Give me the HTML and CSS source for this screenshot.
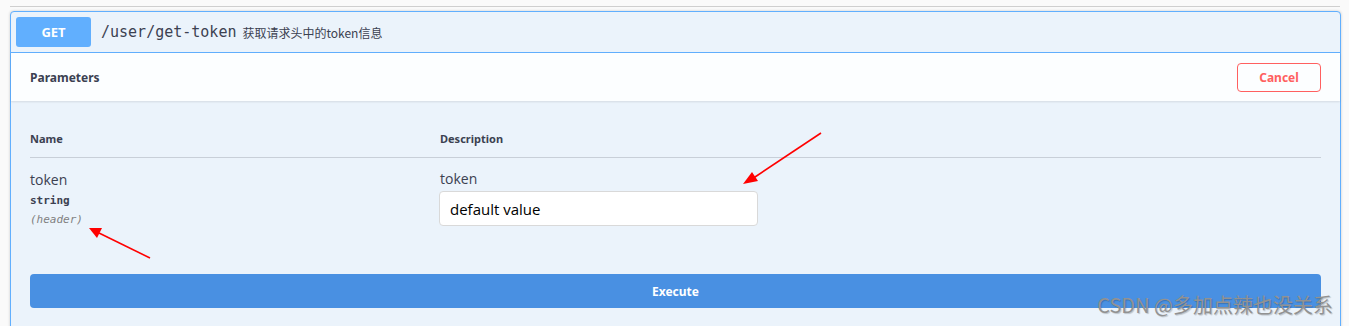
FILE: index.html
```html
<!DOCTYPE html>
<html lang="en">
<head>
  <meta charset="UTF-8">
  <meta name="viewport" content="width=device-width, initial-scale=1.0">
  <title>/user/get-token</title>
  <link rel="stylesheet" href="styles.css">
</head>
<body>
  <div class="swagger">
    <div class="swagger__rule"></div>

    <!-- Operation block -->
    <section class="opblock">
      <div class="opblock__summary">
        <span class="opblock__method">GET</span>
        <span class="opblock__path">/user/get-token</span>
        <span class="opblock__desc">获取请求头中的token信息</span>
      </div>

      <div class="opblock__section-header">
        <h4 class="opblock__title">Parameters</h4>
        <button class="btn btn--cancel">Cancel</button>
      </div>

      <div class="params">
        <div class="params__head">
          <div class="params__col params__col--name">Name</div>
          <div class="params__col">Description</div>
        </div>
        <div class="params__row">
          <div class="params__col params__col--name">
            <div class="params__name">token</div>
            <div class="params__type">string</div>
            <div class="params__in">(header)</div>
          </div>
          <div class="params__col">
            <div class="params__label">token</div>
            <input class="params__input" type="text" value="default value">
          </div>
        </div>
      </div>

      <div class="opblock__execute">
        <button class="btn btn--execute">Execute</button>
      </div>
    </section>

    <!-- Annotation arrows -->
    <svg class="annot" width="1349" height="326" viewBox="0 0 1349 326">
      <g fill="#f00" stroke="#f00">
        <line x1="821" y1="133" x2="752" y2="179" stroke-width="1.6"/>
        <polygon points="743,184 752,172 758,181" stroke="none"/>
        <line x1="150" y1="258" x2="99" y2="233" stroke-width="1.6"/>
        <polygon points="89,228 102,228 97,238" stroke="none"/>
      </g>
    </svg>

    <div class="watermark">CSDN @多加点辣也没关系</div>
  </div>
</body>
</html>
```

FILE: styles.css
```css
:root {
  --get-color: #61affe;
  --get-bg: #ebf3fb;
  --text-color: #3b4151;
  --cancel-color: #ff6060;
  --execute-color: #4990e2;
}
* { box-sizing: border-box; margin: 0; padding: 0; }
body {
  font-family: "Open Sans", "Noto Sans CJK SC", sans-serif;
  background: #fafafa;
  color: var(--text-color);
  overflow: hidden;
}
.swagger {
  position: relative;
  height: 326px;
  padding: 6px 8px 0 10px;
}
.swagger__rule {
  height: 1px;
  background: #cfcfcf;
  margin-right: 1px;
}
.opblock {
  margin-top: 4px;
  border: 1px solid var(--get-color);
  border-radius: 4px 4px 0 0;
  background: var(--get-bg);
  height: 400px;
  box-shadow: 0 0 3px rgba(0, 0, 0, 0.19);
}
.opblock__summary {
  display: flex;
  align-items: center;
  padding: 5px;
  border-bottom: 1px solid var(--get-color);
}
.opblock__method {
  width: 75px;
  height: 30px;
  line-height: 30px;
  border-radius: 3px;
  background: var(--get-color);
  color: #fff;
  text-align: center;
  font-family: "Noto Sans", sans-serif;
  font-weight: 700;
  font-size: 13px;
}
.opblock__path {
  margin-left: 10px;
  font-family: "DejaVu Sans Mono", monospace;
  font-size: 15px;
}
.opblock__desc {
  margin-left: 6px;
  font-family: "Noto Sans CJK SC", sans-serif;
  font-size: 12px;
}
.opblock__section-header {
  display: flex;
  align-items: center;
  justify-content: space-between;
  height: 48px;
  padding: 0 19px 0 19px;
  background: rgba(255, 255, 255, 0.85);
  box-shadow: 0 1px 2px rgba(0, 0, 0, 0.1);
}
.opblock__title {
  font-family: "Noto Sans", sans-serif;
  font-size: 12px;
  font-weight: 700;
}
.btn {
  font-family: "Noto Sans", sans-serif;
  font-weight: 700;
  font-size: 12px;
  border-radius: 4px;
  cursor: pointer;
}
.btn--cancel {
  width: 84px;
  height: 29px;
  background: transparent;
  border: 1.5px solid var(--cancel-color);
  color: var(--cancel-color);
  margin-top: 1px;
}
.params {
  padding: 20px 19px 0 19px;
}
.params__head {
  display: flex;
  padding: 10px 0 11px;
  border-bottom: 1px solid rgba(59, 65, 81, 0.2);
  font-family: "Noto Sans", sans-serif;
  font-size: 11px;
  font-weight: 700;
}
.params__row {
  display: flex;
  padding-top: 12px;
}
.params__col { flex: 1; }
.params__col--name { flex: 0 0 410px; }
.params__name {
  font-size: 14px;
  line-height: 20px;
}
.params__type {
  margin-top: 3px;
  font-family: "DejaVu Sans Mono", monospace;
  font-size: 11px;
  font-weight: 600;
  line-height: 16px;
}
.params__in {
  margin-top: 3px;
  font-family: "DejaVu Sans Mono", monospace;
  font-size: 11px;
  font-style: italic;
  line-height: 16px;
  color: #808080;
}
.params__label {
  font-size: 14px;
  line-height: 18px;
}
.params__input {
  display: block;
  margin-top: 3px;
  margin-left: -1px;
  width: 319px;
  height: 35px;
  padding: 0 10px;
  border: 1px solid #d9d9d9;
  border-radius: 4px;
  background: #fff;
  font-family: "Open Sans", sans-serif;
  font-size: 15px;
  color: #000;
}
.opblock__execute {
  padding: 46px 19px 0 19px;
}
.btn--execute {
  display: block;
  width: 100%;
  height: 34px;
  border: none;
  background: var(--execute-color);
  color: #fff;
}
.annot {
  position: absolute;
  left: 0;
  top: 0;
  pointer-events: none;
}
.watermark {
  position: absolute;
  right: 16px;
  top: 290px;
  font-family: "Noto Sans CJK SC", sans-serif;
  font-size: 20px;
  color: #929292;
  text-shadow: 1px 1px 1px rgba(0, 0, 0, 0.2);
}
```
